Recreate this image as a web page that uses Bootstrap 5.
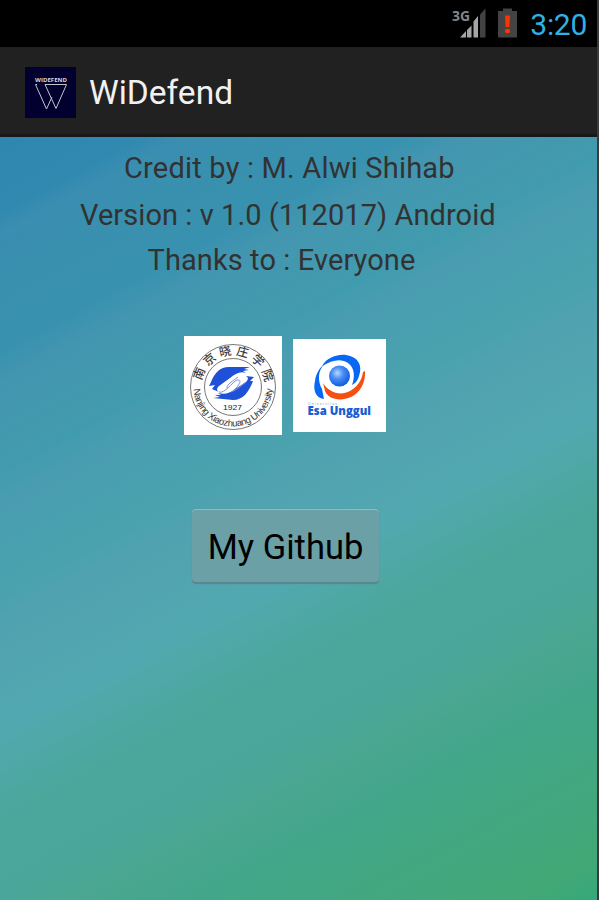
<!DOCTYPE html>
<html lang="en">
<head>
<meta charset="utf-8">
<meta name="viewport" content="width=device-width, initial-scale=1">
<title>WiDefend</title>
<link href="https://cdn.jsdelivr.net/npm/bootstrap@5.3.0/dist/css/bootstrap.min.css" rel="stylesheet">
<style>
  body { font-family: Roboto, "Noto Sans", sans-serif; background: #3b3b3b; height: 900px; overflow: hidden; }
  .phone { width: 597px; height: 900px; }
  .status { height: 47px; background: #000; }
  .battery { margin-left: 11px; }
  .clock { color: #33b0e2; font-size: 30px; letter-spacing: -.3px; line-height: 47px; margin-left: 12px; margin-right: 10px; padding-top: 2px; }
  .appbar { height: 90px; background: #212121; border-bottom: 3px solid #181818; padding-left: 25px; padding-top: 3px; }
  .appname { color: #f1f1f1; font-size: 33.5px; line-height: 40px; margin-left: 13px; padding-top: 1px; }
  .screen {
    color: #323232;
    background: linear-gradient(152deg, #2f87b0 0%, #3189b0 7%, #3a8eb0 9%, #3890ae 14%, #3892af 20%, #4496b0 23%, #419bae 31%, #4a9db0 34%, #49a2ae 42%, #51a2b0 45%, #52a8b0 55%, #50a8a8 58%, #4ba69c 63%, #4aa69a 70%, #4ba692 74%, #42a78a 80%, #43a77e 90%, #42a875 96%, #36a87b 100%);
  }
  .info { font-size: 29px; line-height: 34px; white-space: nowrap; }
  .info-credit { margin-top: 14px; margin-left: 124px; letter-spacing: .2px; }
  .info-version { margin-top: 13px; margin-left: 80px; letter-spacing: .07px; }
  .info-thanks { margin-top: 11px; margin-left: 147.500px; letter-spacing: .1px; }
  .logos { margin-top: 59px; margin-left: 184px; gap: 11px; height: 99px; }
  .github { margin-top: 74px; margin-left: 192px; width: 187px; height: 75px; padding: 2px 0 0; font-size: 34.5px; color: #000;
    background: #6ba0a7; border: 0; box-shadow: inset 0 1px #93bcc1, inset 0 -2px #5a878b, 0 0 1px #57898f; }
  .github:hover { background: #79a9af; }
</style>
</head>
<body>
<div class="phone d-flex flex-column">
  <header class="status d-flex align-items-center justify-content-end flex-shrink-0">
    <svg width="36" height="47" viewBox="0 0 36 47" aria-label="3G signal">
      <text x="1" y="21" font-family="Open Sans" font-weight="700" font-size="15" textLength="18" lengthAdjust="spacingAndGlyphs" fill="#858585">3G</text>
      <path d="M9 37.500 15 31V37.500zM16 30 20.500 25.500V37.500H16zM22.500 21.500 27 16V37.500H22.500z" fill="#a5a5a5"/>
      <path d="M29 14.500 34.500 8.500V37.500H29z" fill="#424242"/>
    </svg>
    <svg width="20" height="47" viewBox="0 0 20 47" class="battery" aria-label="Battery low">
      <path d="M0 11H5V8.500H14V11H19V37.500H0z" fill="#434343"/>
      <path d="M7 15.500H12L11.300 27H7.700z" fill="#ff3300"/>
      <rect x="7" y="29" width="5" height="4" rx="1.500" fill="#ff3300"/>
    </svg>
    <span class="clock">3:20</span>
  </header>
  <nav class="appbar d-flex align-items-center flex-shrink-0">
    <svg width="51" height="51" viewBox="0 0 51 51" aria-hidden="true">
      <rect width="51" height="51" fill="#01002e"/>
      <text x="10" y="15" font-family="Open Sans" font-weight="700" font-size="4.500" textLength="32" lengthAdjust="spacingAndGlyphs" fill="#d5d5de">WIDEFEND</text>
      <path d="M10.500 17.500 21.500 42 27 30M10.500 17.500H12M20 17.500H41.500L31 41.500Z" fill="none" stroke="#c4c4ce" stroke-width="1"/>
    </svg>
    <span class="appname">WiDefend</span>
  </nav>
  <main class="screen flex-grow-1 d-flex flex-column align-items-start">
    <div class="info info-credit">Credit by : M. Alwi Shihab</div>
    <div class="info info-version">Version : v 1.0 (112017) Android</div>
    <div class="info info-thanks">Thanks to : Everyone</div>
    <div class="logos d-flex align-items-center">
      <svg width="98" height="99" viewBox="0 0 98 99" aria-label="Nanjing Xiaozhuang University">
        <defs>
          <path id="sealTop" d="M17 51A32 32 0 0 1 81 51"/>
          <path id="sealBottom" d="M9.500 51A39.500 39.500 0 0 0 88.500 51"/>
        </defs>
        <rect width="98" height="99" fill="#fff"/>
        <circle cx="49" cy="51" r="42.500" fill="none" stroke="#777" stroke-width="1"/>
        <circle cx="49" cy="51" r="28.500" fill="none" stroke="#777" stroke-width="1"/>
        <text font-family="Noto Sans CJK SC" font-weight="500" font-size="12" fill="#3a3a3a"><textPath href="#sealTop" startOffset="6" textLength="90">南京晓庄学院</textPath></text>
        <text font-family="Liberation Sans" font-size="9.500" fill="#333"><textPath href="#sealBottom" startOffset="2" textLength="120">Nanjing Xiaozhuang University</textPath></text>
        <path d="M27 46C31 36 37 30 47 31L66 31 60 33 65 34 59 35 62 37C56 35 51 38 46 42L35 50C32 53 33 55 35 56L28 53 31 49 25 50z" fill="#1e50d8"/>
        <path d="M69 45C65 56 59 64 49 64L29 62 36 61 31 59 37 59 34 57C41 59 46 57 51 53L62 46C65 43 64 41 62 40L70 41 66 45z" fill="#1e50d8"/>
        <path d="M35 56C41 58 48 46 53 44 59 43 55 50 49 55M44 53C40 50 49 45 54 41M47 56C53 54 57 50 62 46" fill="none" stroke="#7893dc" stroke-width="1"/>
        <text x="39" y="74" font-family="Liberation Sans" font-size="7.500" textLength="19" lengthAdjust="spacingAndGlyphs" fill="#222">1927</text>
      </svg>
      <svg width="93" height="93" viewBox="0 0 93 93" aria-label="Universitas Esa Unggul">
        <defs>
          <radialGradient id="orb" cx=".4" cy=".36" r=".68"><stop offset="0" stop-color="#b8d8ff"/><stop offset=".4" stop-color="#4b90f5"/><stop offset="1" stop-color="#0b55dd"/></radialGradient>
        </defs>
        <rect width="93" height="93" fill="#fff"/>
        <path d="M29 27C34 18 45 15 53 16 65 18 70 26 66 37 65 41 63 44 59 46 62 38 62 29 55 24 48 19 39 21 29 27z" fill="#0868f3"/>
        <path d="M32 25C24 31 25 43 29 50L31 60C22 59 20 50 22 42 23 34 27 28 32 25z" fill="#0868f3"/>
        <path d="M30 44C35 52 45 57 55 53 64 49 69 41 70 33L72 32C73 43 67 54 58 58 47 63 35 60 32 52z" fill="#f55011"/>
        <circle cx="46.500" cy="37" r="10.500" fill="url(#orb)"/>
        <text x="15" y="66" font-family="Liberation Sans" font-size="3.500" textLength="29" fill="#7aa2c4">Universitas</text>
        <text x="14.500" y="76" font-family="Open Sans" font-weight="800" font-size="12" textLength="63.500" lengthAdjust="spacingAndGlyphs" fill="#175dd2">Esa Unggul</text>
      </svg>
    </div>
    <button type="button" class="btn github rounded-1">My Github</button>
  </main>
</div>
<script src="https://cdn.jsdelivr.net/npm/bootstrap@5.3.0/dist/js/bootstrap.bundle.min.js"></script>
</body>
</html>
